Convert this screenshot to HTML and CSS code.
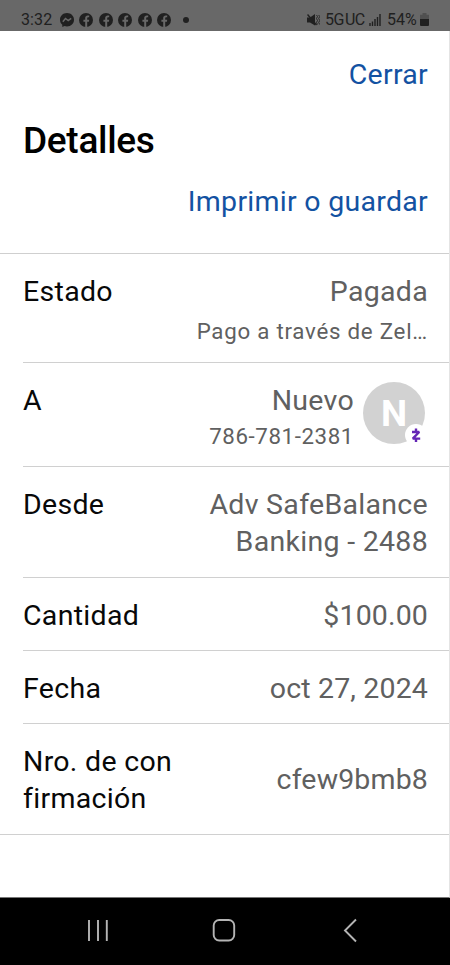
FILE: index.html
```html
<!DOCTYPE html>
<html lang="es">
<head>
<meta charset="utf-8">
<title>Detalles</title>
<link rel="stylesheet" href="styles.css">
</head>
<body>
<svg width="0" height="0" class="defs">
  <symbol id="fb" viewBox="0 0 14 14"><circle cx="7" cy="7" r="7" fill="#202020"/><path d="M6.2 14V8.800H4.400V6.800h1.800V5.200c0-1.800 1-2.800 2.600-2.800h1.400v1.800H9.100c-.6 0-.9.3-.9.9v1.700h2l-.3 2H8.200V14z" fill="#686868"/></symbol>
</svg>
<div class="screen">
  <header class="status">
    <span class="time">3:32</span>
    <div class="notifs">
      <svg class="app" viewBox="0 0 14 14"><path d="M7 0C3 0 0 2.900 0 6.700c0 2.100.9 3.900 2.300 5.100V14l2.200-1c.8.3 1.600.4 2.500.4 4 0 7-2.900 7-6.700S11 0 7 0z" fill="#202020"/><path d="M2.800 8.700l2.700-3.200 2.700 2 3-2.200" fill="none" stroke="#686868" stroke-width="1.5"/></svg>
      <svg class="app"><use href="#fb"/></svg>
      <svg class="app"><use href="#fb"/></svg>
      <svg class="app"><use href="#fb"/></svg>
      <svg class="app"><use href="#fb"/></svg>
      <svg class="app"><use href="#fb"/></svg>
    </div>
    <i class="dot"></i>
    <svg class="mute" viewBox="0 0 13 12"><path d="M0 3.500h3L8 0v11.500L3 8.500H0z" fill="#202020"/><path d="M.5.5l9 10.500" stroke="#202020" stroke-width="1.500"/><path d="M9.500 1l1 1.500-1 2 1 2-1 2 1 2M11.700 1l1 1.500-1 2 1 2-1 2 1 2" fill="none" stroke="#202020" stroke-width=".9"/></svg>
    <span class="net">5G<span class="uc">UC</span></span>
    <svg class="signal" viewBox="0 0 12 12"><path d="M1 9v3M3.500 7.500V12M6 5v7M8.500 3v9M11 0v12" stroke="#202020" stroke-width="1.400"/></svg>
    <span class="pct">54%</span>
    <svg class="battery" viewBox="0 0 9 13"><path d="M2.500 0h4v1.700H9V7H0V1.700h2.500z" fill="#505050"/><path d="M0 6h9v6q0 1-1 1H1q-1 0-1-1z" fill="#202020"/></svg>
  </header>
  <main class="page">
    <div class="head">
      <a class="link close">Cerrar</a>
      <h1>Detalles</h1>
      <a class="link print">Imprimir o guardar</a>
    </div>
    <section class="row state">
      <span class="label">Estado</span>
      <div class="value"><div class="paid">Pagada</div><div class="sub via">Pago a través de Zel…</div></div>
    </section>
    <section class="row to">
      <span class="label">A</span>
      <div class="value"><div class="name">Nuevo</div><div class="sub phone">786-781-2381</div></div>
      <div class="avatar"><span>N</span>
        <svg class="zelle" viewBox="0 0 22 22"><circle cx="11" cy="11" r="11" fill="#fff"/><path d="M7 8h7.200L7.800 14.600h7.400M11 4.500V8M11 14.600v3.400" fill="none" stroke="#6425b5" stroke-width="2.400" stroke-linejoin="bevel"/></svg>
      </div>
    </section>
    <section class="row account">
      <span class="label">Desde</span>
      <div class="value">Adv SafeBalance<br>Banking - 2488</div>
    </section>
    <section class="row"><span class="label">Cantidad</span><div class="value amount">$100.00</div></section>
    <section class="row"><span class="label">Fecha</span><div class="value date">oct 27, 2024</div></section>
    <section class="row last"><span class="label">Nro. de con<br>firmación</span><div class="value code">cfew9bmb8</div></section>
  </main>
  <nav class="navbar">
    <svg viewBox="0 0 450 68"><g fill="none" stroke="#b4b4b4" stroke-width="1.900"><path d="M89 22v21M98 22v21M106.800 22v21"/><rect x="213.700" y="22" width="20.500" height="20.500" rx="5.500"/><path d="M356 21.500L345 32.500l11 11"/></g></svg>
  </nav>
</div>
</body>
</html>
```
FILE: styles.css
```css
* { box-sizing: border-box; }
body { margin: 0; font-family: Roboto, "Liberation Sans", sans-serif; background: #fff; }
.defs { display: block; height: 0; }
.screen { width: 450px; height: 965px; display: flex; flex-direction: column; overflow: hidden; }
.status { height: 31px; flex: none; background: #686868; color: #202020; display: flex; align-items: center; padding: 8px 21px 0 21px; font-size: 16px; line-height: 23px; }
.time { width: 38.500px; letter-spacing: .1px; }
.notifs { display: flex; gap: 5.600px; }
.app { width: 14px; height: 14px; display: block; }
.dot { width: 6px; height: 6px; border-radius: 50%; background: #202020; margin-left: 12px; }
.mute { width: 13px; height: 12px; margin-left: auto; margin-right: 5px; }
.net { width: 44px; letter-spacing: -.5px; }
.uc { margin-left: 1px; }
.signal { width: 12px; height: 12px; margin-top: 1px; }
.pct { width: 33px; margin-left: 6px; letter-spacing: 0; }
.battery { width: 9px; height: 13px; }
.page { flex: 1; border-right: 1px solid #e4e4e4; border-bottom: 1px solid #777; font-size: 28.500px; line-height: 36.700px; letter-spacing: .3px; }
.head { height: 223px; border-bottom: 1px solid #cfcfcf; padding: 26px 21px 0 23px; display: flex; flex-direction: column; }
.link { color: #1352a2; align-self: flex-end; line-height: 36px; letter-spacing: .28px; }
h1 { margin: 25px 0 0; font-size: 37px; line-height: 46px; font-weight: 500; letter-spacing: -.3px; }
.print { margin-top: 20px; }
.row { height: 73.400px; margin-left: 23px; padding: 20px 21px 0 0; border-bottom: 1px solid #d0d0d0; display: flex; color: #606060; white-space: nowrap; }
.label { color: #080808; }
.value { margin-left: auto; text-align: right; }
.amount, .date, .code { letter-spacing: .15px; }
.sub { font-size: 22.300px; line-height: 40px; letter-spacing: .75px; }
.state { height: 109px; }
.to { height: 104px; }
.phone { line-height: 32px; letter-spacing: .6px; }
.avatar { position: relative; width: 62px; height: 62px; border-radius: 50%; background: #d2d2d2; color: #fff; margin: -1px 3px 0 9px; padding-top: 2px; display: flex; align-items: center; justify-content: center; font-size: 37px; font-weight: 700; letter-spacing: 0; }
.zelle { position: absolute; left: 42px; top: 42px; width: 22px; height: 22px; }
.account { height: 110.500px; }
.last { height: 110.500px; margin-left: 0; padding-left: 23px; }
.code { padding-top: 18px; }
.navbar { height: 67px; flex: none; background: #000; }
.navbar svg { display: block; width: 450px; height: 68px; }
```
